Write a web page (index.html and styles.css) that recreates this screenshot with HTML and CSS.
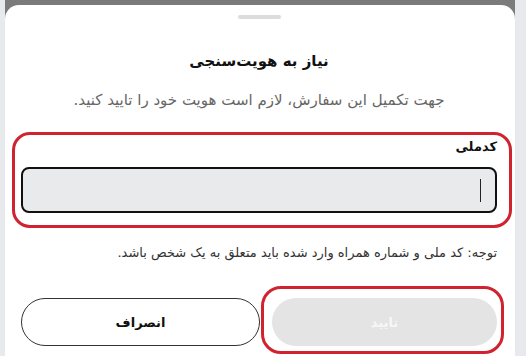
FILE: index.html
```html
<!DOCTYPE html>
<html lang="fa" dir="rtl">
<head>
<meta charset="utf-8">
<link rel="stylesheet" href="styles.css">
</head>
<body>
<div class="screen">
  <div class="sheet">
    <div class="handle"></div>
    <h1 class="title">نیاز به هویت‌سنجی</h1>
    <p class="subtitle">جهت تکمیل این سفارش، لازم است هویت خود را تایید کنید.</p>
    <div class="field">
      <label class="label" for="nid">کدملی</label>
      <div class="input"><span class="caret"></span></div>
      <div class="mark mark-field"></div>
    </div>
    <p class="note">توجه: کد ملی و شماره همراه وارد شده باید متعلق به یک شخص باشد.</p>
    <div class="actions">
      <div class="btn-wrap">
        <button class="btn btn-primary">تایید</button>
        <div class="mark mark-btn"></div>
      </div>
      <button class="btn btn-outline">انصراف</button>
    </div>
  </div>
</div>
</body>
</html>
```
FILE: styles.css
```css
html, body {
  margin: 0;
  padding: 0;
  height: 100%;
  overflow: hidden;
}
body {
  background: #e8e9ed;
  font-family: "DejaVu Sans", "Noto Sans", sans-serif;
  padding-left: 5px;
  padding-right: 11px;
}
.screen {
  background: #7b7b7b;
  height: 100%;
  padding-top: 5px;
  box-sizing: border-box;
}
.sheet {
  background: #ffffff;
  height: 100%;
  border-radius: 14px 14px 0 0;
  padding: 10px 18px 0 16px;
  box-sizing: border-box;
  display: flex;
  flex-direction: column;
}
.handle {
  align-self: center;
  width: 43px;
  height: 4px;
  border-radius: 2px;
  background: #dcdcdc;
}
.title {
  margin: 31px 0 0;
  text-align: center;
  font-size: 15px;
  font-weight: bold;
  color: #111;
  line-height: 22px;
}
.subtitle {
  margin: 17px 0 0;
  text-align: center;
  font-size: 15px;
  color: #666;
  line-height: 22px;
}
.field {
  position: relative;
  margin-top: 26px;
  display: flex;
  flex-direction: column;
}
.label {
  font-size: 13px;
  font-weight: bold;
  color: #111;
  line-height: 20px;
}
.input {
  margin-top: 10px;
  height: 46px;
  box-sizing: border-box;
  background: #e9eaec;
  border: 2px solid #111;
  border-radius: 8px;
  display: flex;
  align-items: center;
  padding-right: 14px;
}
.caret {
  width: 1px;
  height: 23px;
  background: #222;
}
.mark {
  position: absolute;
  border: 3px solid #d0222f;
  pointer-events: none;
}
.mark-field {
  left: -9px;
  right: -15px;
  top: -5px;
  bottom: -15px;
  border-radius: 18px;
}
.note {
  margin: 30px 0 0;
  font-size: 13px;
  color: #333;
  line-height: 20px;
}
.actions {
  margin-top: 35px;
  display: flex;
  gap: 12px;
}
.btn-wrap {
  position: relative;
  flex: 1;
  display: flex;
}
.btn {
  flex: 1;
  height: 48px;
  border-radius: 24px;
  font-family: inherit;
  font-size: 13px;
  font-weight: bold;
}
.btn-primary {
  background: #e4e4e4;
  color: #f7f7f7;
  border: none;
}
.btn-outline {
  background: #fff;
  color: #111;
  border: 1px solid #333;
}
.mark-btn {
  left: -11px;
  right: -7px;
  top: -12px;
  bottom: -8px;
  border-radius: 20px;
}
```
